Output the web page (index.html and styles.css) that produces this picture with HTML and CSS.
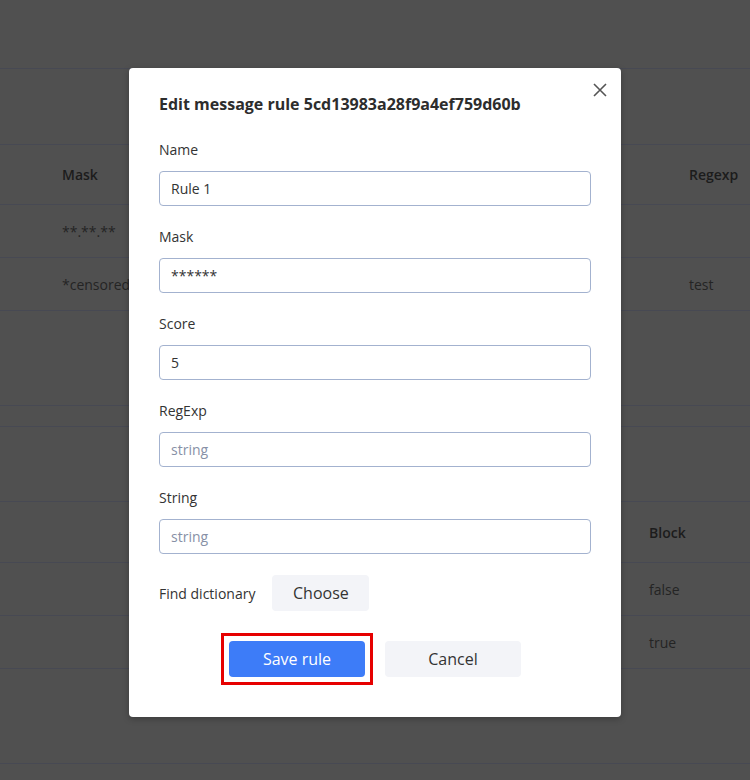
FILE: index.html
```html
<!DOCTYPE html>
<html>
<head>
<meta charset="utf-8">
<link rel="stylesheet" href="styles.css">
</head>
<body>
<div class="page">
  <div class="band band-top"></div>
  <div class="band band-toolbar"></div>
  <div class="trow trow-head t1"><div>Mask</div><div>Regexp</div></div>
  <div class="trow t1"><div>**.**.**</div><div></div></div>
  <div class="trow t1"><div>*censored</div><div>test</div></div>
  <div class="band band-gap"></div>
  <div class="band band-small"></div>
  <div class="band band-toolbar2"></div>
  <div class="trow trow-head t2"><div></div><div>Block</div></div>
  <div class="trow t2"><div></div><div>false</div></div>
  <div class="trow t2"><div></div><div>true</div></div>
  <div class="band band-bottom"></div>
</div>

<div class="modal">
  <button class="close" aria-label="Close">
    <svg width="14" height="14" viewBox="0 0 14 14"><path d="M1 1 L13 13 M13 1 L1 13" stroke="#555" stroke-width="1.6" fill="none"/></svg>
  </button>
  <h2 class="title">Edit message rule 5cd13983a28f9a4ef759d60b</h2>
  <div class="field">
    <label>Name</label>
    <input class="input" value="Rule 1">
  </div>
  <div class="field">
    <label>Mask</label>
    <input class="input" value="******">
  </div>
  <div class="field">
    <label>Score</label>
    <input class="input" value="5">
  </div>
  <div class="field">
    <label>RegExp</label>
    <input class="input" placeholder="string">
  </div>
  <div class="field">
    <label>String</label>
    <input class="input" placeholder="string">
  </div>
  <div class="dict">
    <span>Find dictionary</span>
    <button class="btn btn-light btn-choose">Choose</button>
  </div>
  <div class="actions">
    <button class="btn btn-primary">Save rule</button>
    <button class="btn btn-light btn-cancel">Cancel</button>
  </div>
</div>
</body>
</html>
```
FILE: styles.css
```css
* { box-sizing: border-box; }
html, body {
  margin: 0;
  padding: 0;
  background: #505050;
  font-family: "Open Sans", "Noto Sans", sans-serif;
  width: 750px;
  height: 780px;
  overflow: hidden;
}
.page {
  display: flex;
  flex-direction: column;
}
.band, .trow { border-bottom: 1px solid #474953; }
.band-top { height: 69px; }
.band-toolbar { height: 76px; }
.band-gap { height: 95px; }
.band-small { height: 21px; }
.band-toolbar2 { height: 75px; }
.band-bottom { height: 95px; }
.trow {
  display: grid;
  align-items: center;
  height: 53px;
  font-size: 14px;
  color: #242424;
}
.trow-head { height: 60px; font-weight: 600; color: #1c1c1c; }
.t2.trow-head { height: 61px; }
.t1 { grid-template-columns: 627px 1fr; padding-left: 62px; }
.t2 { grid-template-columns: 649px 1fr; }

.modal {
  position: absolute;
  left: 129px;
  top: 68px;
  width: 492px;
  height: 649px;
  background: #fff;
  border-radius: 4px;
  box-shadow: 0 2px 6px rgba(0,0,0,0.25);
  padding: 25px 30px 40px;
  display: flex;
  flex-direction: column;
}
.close {
  position: absolute;
  top: 15px;
  right: 14px;
  width: 14px;
  height: 14px;
  padding: 0;
  border: 0;
  background: transparent;
  display: flex;
}
.title {
  margin: 0 0 25px;
  font-size: 16px;
  line-height: 22px;
  font-weight: 700;
  color: #2d2d2d;
}
.field {
  display: flex;
  flex-direction: column;
  margin-bottom: 21px;
}
.field label {
  font-size: 14px;
  line-height: 20px;
  color: #333;
  margin-bottom: 11px;
}
.input {
  height: 35px;
  width: 100%;
  border: 1px solid #a3b2cf;
  border-radius: 4px;
  padding: 0 11px;
  font-family: inherit;
  font-size: 14px;
  color: #333;
  outline: none;
}
.input::placeholder { color: #8790a6; }
.dict {
  display: flex;
  align-items: center;
  gap: 17px;
  font-size: 14px;
  color: #333;
  margin-bottom: 30px;
}
.btn {
  font-family: inherit;
  font-size: 16px;
  border: 0;
  border-radius: 4px;
  height: 36px;
  cursor: pointer;
}
.btn-light { background: #f3f4f8; color: #333; }
.btn-choose { width: 97px; padding: 0; }
.actions {
  display: flex;
  justify-content: center;
  gap: 20px;
}
.btn-primary {
  position: relative;
  width: 136px;
  background: #3d7cf8;
  color: #fff;
}
.btn-primary::after {
  content: "";
  position: absolute;
  inset: -8px;
  border: 3px solid #e60000;
  pointer-events: none;
}
.btn-cancel { width: 136px; }
```
